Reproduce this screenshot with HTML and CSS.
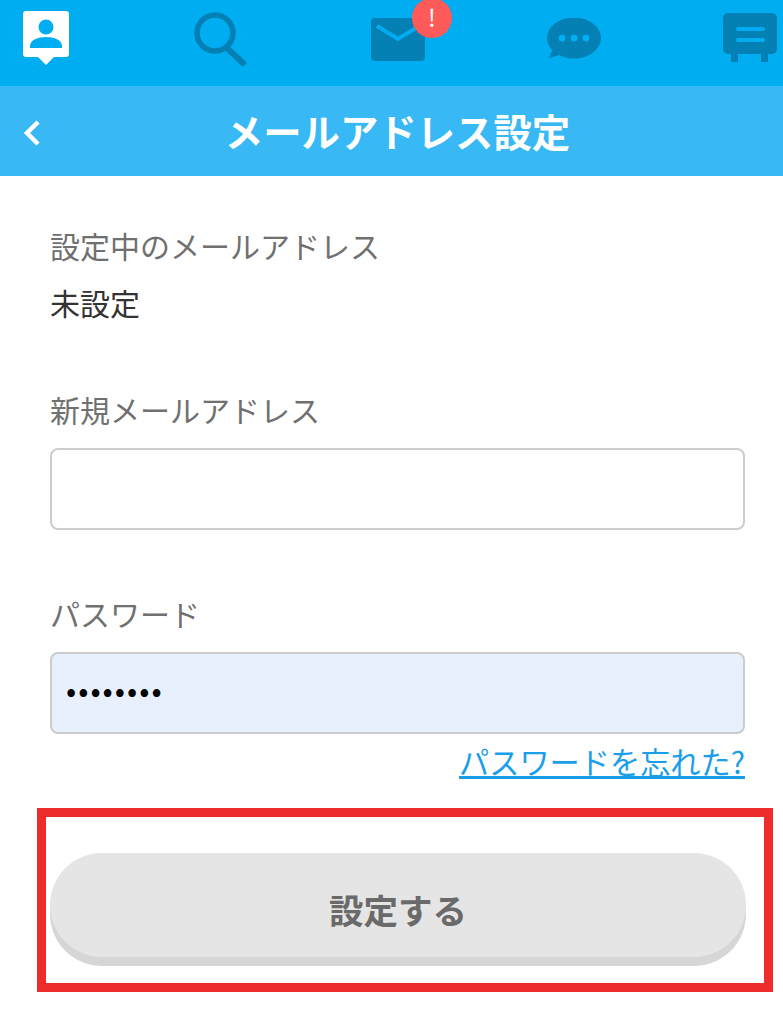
FILE: index.html
```html
<!DOCTYPE html>
<html lang="ja">
<head>
    <meta charset="UTF-8" />
    <meta name="viewport" content="width=device-width, initial-scale=1" />
    <title>メールアドレス設定</title>
    <link rel="stylesheet" href="styles.css">
</head>
<body>

    <div class="tabs">
        <a class="tab tab-profile">
            <svg width="48" height="56" viewBox="0 0 48 56">
                <path d="M3 0H43Q46 0 46 3V43Q46 46 43 46H31L23 54L15 46H3Q0 46 0 43V3Q0 0 3 0Z" fill="#fff"/>
                <circle cx="23" cy="16" r="7.5" fill="#00adf1"/>
                <path d="M7 37V35C7 29 15 26 23 26C31 26 39 29 39 35V37Z" fill="#00adf1"/>
            </svg>
        </a>
        <a class="tab tab-search">
            <svg width="56" height="56" viewBox="0 0 56 56">
                <circle cx="22" cy="21" r="18" fill="none" stroke="#0480b4" stroke-width="5.5"/>
                <path d="M36 38L50 51" fill="none" stroke="#0480b4" stroke-width="6" stroke-linecap="round"/>
            </svg>
        </a>
        <a class="tab tab-mail">
            <svg width="54" height="44" viewBox="0 0 54 44">
                <rect width="54" height="43" rx="4" fill="#0480b4"/>
                <path d="M6 8L27 21L48 8" fill="none" stroke="#00adf1" stroke-width="4"/>
            </svg>
            <span class="badge">!</span>
        </a>
        <a class="tab tab-chat">
            <svg width="54" height="42" viewBox="0 0 54 42">
                <ellipse cx="27" cy="20" rx="27" ry="20.5" fill="#0480b4"/>
                <path d="M6 30L2 40L16 36Z" fill="#0480b4"/>
                <circle cx="15" cy="20" r="3.5" fill="#00adf1"/>
                <circle cx="27" cy="20" r="3.5" fill="#00adf1"/>
                <circle cx="39" cy="20" r="3.5" fill="#00adf1"/>
            </svg>
        </a>
        <a class="tab tab-board">
            <svg width="54" height="50" viewBox="0 0 54 50">
                <rect width="54" height="41" rx="5" fill="#0480b4"/>
                <rect x="8" y="40" width="7" height="9" fill="#0480b4"/>
                <rect x="38" y="40" width="7" height="9" fill="#0480b4"/>
                <rect x="13" y="14" width="29" height="4" rx="2" fill="#00adf1"/>
                <rect x="13" y="25" width="29" height="4" rx="2" fill="#00adf1"/>
            </svg>
        </a>
    </div>

    <div class="title-bar">
        <svg class="back" width="18" height="28" viewBox="0 0 18 28">
            <path d="M16 3L5 14L16 25" fill="none" stroke="#fff" stroke-width="4.5"/>
        </svg>
        <h1>メールアドレス設定</h1>
    </div>

    <div class="content">
        <div class="current">
            <p class="label">設定中のメールアドレス</p>
            <p class="value">未設定</p>
        </div>
        <div class="form-group">
            <label class="label">新規メールアドレス</label>
            <div class="input"></div>
        </div>
        <div class="form-group">
            <label class="label">パスワード</label>
            <div class="input input-filled">••••••••</div>
        </div>
        <div class="forgot">
            <a>パスワードを忘れた?</a>
        </div>
        <div class="highlight">
            <div class="btn">設定する</div>
        </div>
    </div>

</body>
</html>
```

FILE: styles.css
```css
body {
    margin: 0;
    background-color: #fff;
    font-family: "Noto Sans CJK JP", "Noto Sans", sans-serif;
}
.tabs {
    height: 86px;
    background-color: #00adf1;
    display: flex;
    justify-content: space-between;
    padding: 0 6px 0 23px;
    box-sizing: border-box;
}
.tab {
    position: relative;
    display: block;
}
.tab svg {
    display: block;
}
.tab-profile {
    padding-top: 11px;
}
.tab-search {
    padding-top: 12px;
}
.tab-mail {
    padding-top: 18px;
}
.tab-chat {
    padding-top: 18px;
}
.tab-board {
    padding-top: 13px;
}
.badge {
    position: absolute;
    top: -2px;
    left: 41px;
    width: 40px;
    height: 40px;
    border-radius: 50%;
    background-color: #ff5a5a;
    color: #fff;
    font-size: 24px;
    line-height: 38px;
    text-align: center;
}
.title-bar {
    height: 90px;
    padding: 0 0 2px 12px;
    box-sizing: border-box;
    background-color: #38b8f5;
    display: flex;
    align-items: center;
    justify-content: center;
    position: relative;
}
.title-bar h1 {
    margin: 0;
    color: #fff;
    font-size: 38.4px;
    font-weight: bold;
    line-height: 1;
}
.back {
    position: absolute;
    left: 22px;
    top: 33px;
}
.content {
    padding: 48px 38px 0 50px;
}
.label {
    display: block;
    margin: 0;
    color: #707070;
    font-size: 30px;
    line-height: 42px;
}
.value {
    margin: 15px 0 0;
    color: #333;
    font-size: 30px;
    line-height: 42px;
}
.form-group {
    margin-top: 65px;
}
.form-group + .form-group {
    margin-top: 62px;
}
.input {
    height: 82px;
    margin-top: 18px;
    border: 2px solid #ccc;
    border-radius: 8px;
    box-sizing: border-box;
    background-color: #fff;
    padding-left: 14px;
    font-size: 30px;
    letter-spacing: 2px;
    line-height: 70px;
    color: #000;
}
.input-filled {
    background-color: #e8f0fd;
}
.forgot {
    text-align: right;
    margin-top: 5px;
    font-size: 30.2px;
    line-height: 44px;
}
.forgot a {
    color: #1a9eea;
    text-decoration: underline;
}
.highlight {
    margin: 25px -28px 0 -13px;
    border: 9px solid #ee2c2c;
    padding: 36px 18px 26px 4px;
}
.btn {
    height: 104px;
    border-radius: 56px;
    background-color: #e5e5e5;
    box-shadow: 0 9px 0 #d6d6d6;
    color: #6a6a6a;
    font-size: 34.5px;
    font-weight: bold;
    line-height: 112px;
    text-align: center;
}
```
